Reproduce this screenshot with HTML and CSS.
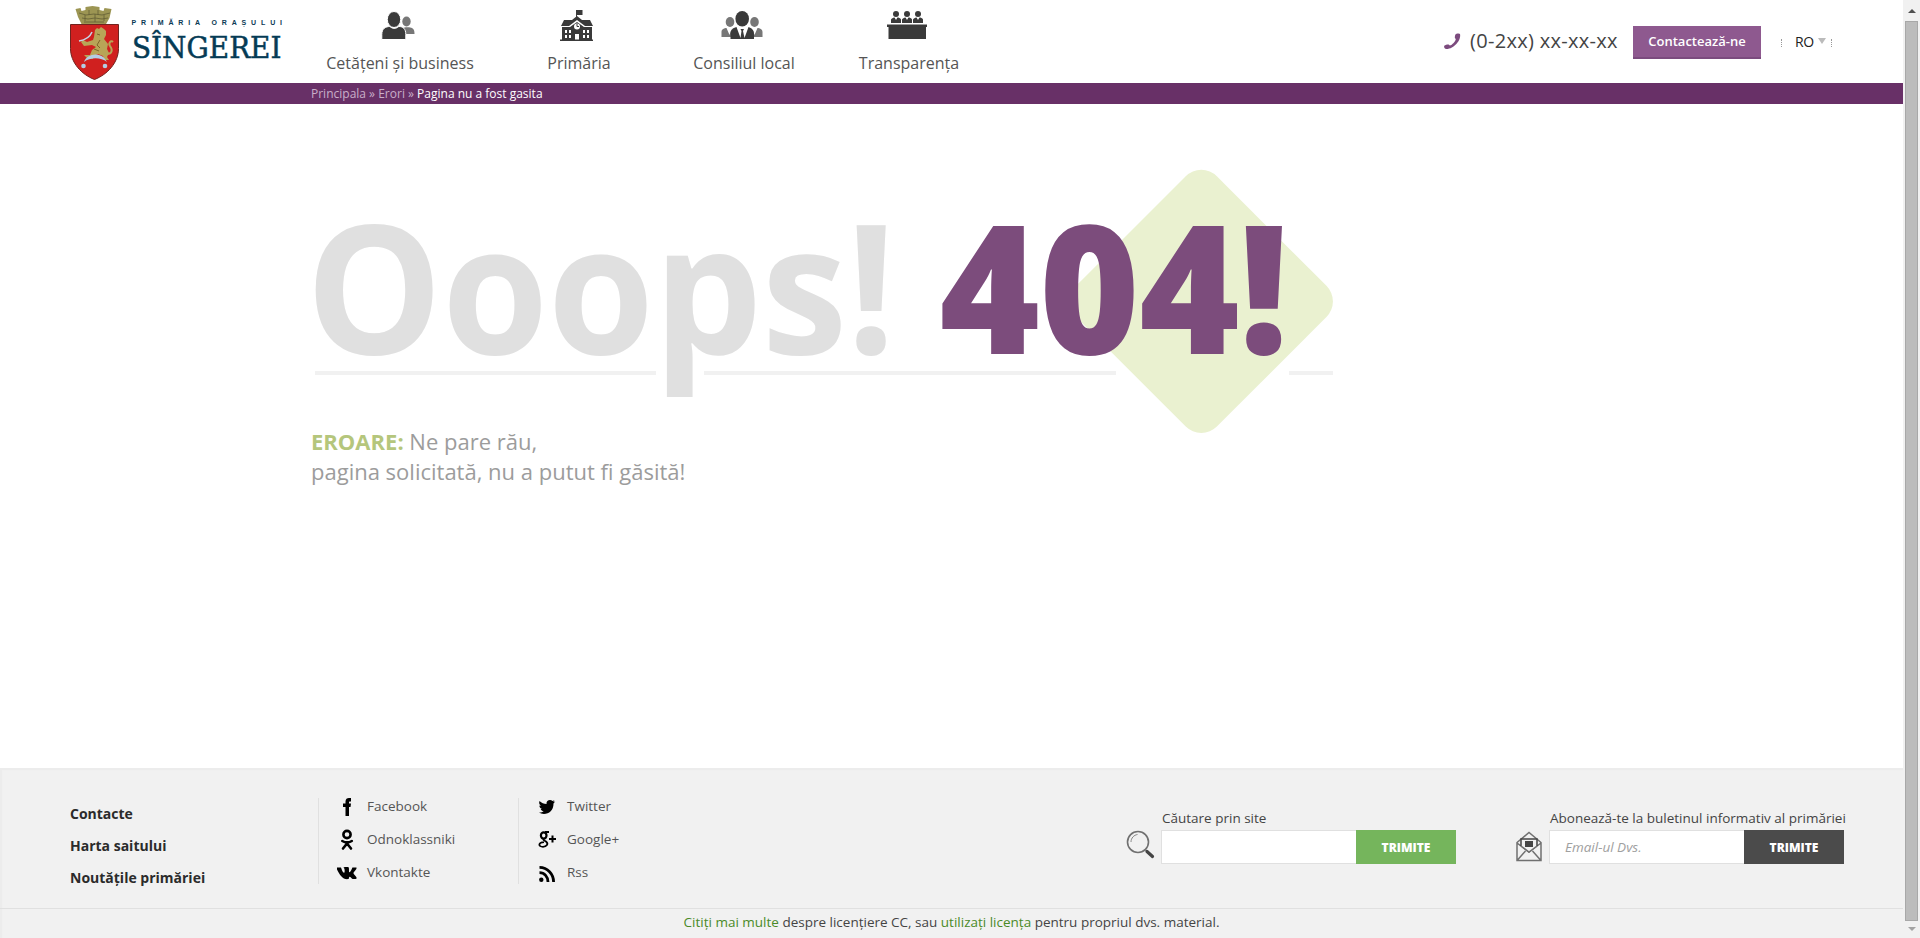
FILE: index.html
```html
<!DOCTYPE html>
<html lang="ro">
<head>
<meta charset="utf-8">
<title>Primăria Orașului Sîngerei</title>
<link rel="stylesheet" href="styles.css">
</head>
<body>
<div class="page">
  <header class="header">
    <a class="logo">
      <svg width="220" height="76" viewBox="0 0 220 76">
        <path class="crown" d="M5.500 4l5-1 1 3 4-1 0-3 7-1 7 1 0 3 4 1 1-3 7 1-2 9-4 7H12L8 12z"/>
        <path class="crown-line" d="M9 8l7 2 8-1 8 1 8-2M12 13l6 1 7-1 7 1 6-1M14 17h20M19 5v5M28 5v5M15 10v6M34 10v6M25 9v8"/>
        <path class="shield" d="M.5 19.500h48v24c0 14-11 26-24 31C11.500 69.500.5 57.500.5 43.500z"/>
        <path class="beast" d="M25 25l2-2 2 1 2-2 3 2 2 2 0 4-2 4 4 5-1 5 2 4-2 4 2 3h-5l-1-4-5-2-5 2 0 3-6-1-3-3 6 0 2-5 4-3-4-2-8 1-3-4 2-2 4 2 6-2 1-3z"/>
        <path class="tail" d="M37 49c5 0 6-4 3-8-2-3 1-6 3-4"/>
        <path class="beast-line" d="M27 29l3 1M30 35l-3 5 3 3M24 44l5 2"/>
        <path class="saber" d="M9 36c6-1 11-4 13-9"/>
        <path class="moon" d="M14 57c3-9 18-11 23 0-6-5-17-5-23 0z"/>
        <circle class="ball" cx="13.500" cy="61" r="2.300"/><circle class="ball" cx="35" cy="61" r="2.300"/>
        <text class="logo-top" x="61.500" y="19.800" textLength="150.500">PRIMĂRIA ORAȘULUI</text>
        <text class="logo-name" x="62" y="52.600" textLength="149.500" lengthAdjust="spacingAndGlyphs">SÎNGEREI</text>
      </svg>
    </a>
    <nav class="nav">
      <a class="nav-item citizens">
        <svg width="34" height="30" viewBox="0 0 34 30"><g fill="#777"><ellipse cx="25.500" cy="11.500" rx="4.200" ry="5"/><path d="M20 24v-5c2-2 9-2 11-1 2 1 2.500 3 2.500 6z"/></g><g fill="#3a3a3a" stroke="#fff"><ellipse cx="13" cy="9.500" rx="6.700" ry="8"/><path d="M.800 29.500v-5c0-6 4-8 8-8 3 2.500 6 2.500 9 0 4 0 7 2 7 8v5z"/></g></svg>
        <span>Cetățeni și business</span>
      </a>
      <a class="nav-item hall">
        <svg width="34" height="32" viewBox="0 0 34 32"><g fill="#3a3a3a"><path d="M16 1h6.500v5H17v4h-1zM4 11h8l5-4 5 4h8l3 6h-8l-8-6-8 6H1z"/><path d="M2 18h8l7-5 7 5h8v12.500h1V32H0v-1.500h2z"/></g><circle cx="17" cy="17.500" r="3" fill="#fff"/><path d="M17 15v2.500h2" fill="none" stroke="#3a3a3a"/><path fill="#fff" d="M5 21h2v3H5zm4 0h2v3H9zm14 0h2v3h-2zm4 0h2v3h-2zM5 26h2v3H5zm4 0h2v3H9zm14 0h2v3h-2zm4 0h2v3h-2zM15 25h4v5.500h-4z"/></svg>
        <span>Primăria</span>
      </a>
      <a class="nav-item council">
        <svg width="42" height="30" viewBox="0 0 42 30"><g fill="#777"><ellipse cx="9" cy="12" rx="4.300" ry="5"/><ellipse cx="33.500" cy="12" rx="4.300" ry="5"/><path d="M.500 27v-5c0-3 3-4 5-4l3 7 2-6v8zM41.500 27v-5c0-3-3-4-5-4l-3 7-2-6v8z"/></g><g fill="#3a3a3a"><ellipse cx="21.200" cy="8.700" rx="6.800" ry="7.700"/><path d="M9.500 29v-5c0-4 2-6 6-7l4 11 1-7-1-2h3.500l-1 2 1.500 7 4-11c3 1 5.500 3 5.500 7v5z"/></g></svg>
        <span>Consiliul local</span>
      </a>
      <a class="nav-item open">
        <svg width="40" height="30" viewBox="0 0 40 30"><g fill="#3a3a3a"><circle cx="9" cy="4" r="3"/><circle cx="20" cy="4" r="3"/><circle cx="31" cy="4" r="3"/><path d="M4 13V9.500C5 8 7 7.500 7.500 7.500L9 10l1.500-2.500c1 0 3 .5 3.500 2V13zM15 13V9.500C16 8 18 7.500 18.500 7.500L20 10l1.500-2.500c1 0 3 .5 3.500 2V13zM26 13V9.500C27 8 29 7.500 29.500 7.500L31 10l1.500-2.500c1 0 3 .5 3.500 2V13zM0 14.500h40V17h-1v12H1.500V17H0z"/></g></svg>
        <span>Transparența</span>
      </a>
    </nav>
    <div class="contact">
      <svg width="17" height="17" viewBox="0 0 17 17"><path fill="#7c4b7e" d="M11.500 1.500C12 .5 15.500 0 16 1c1.500 6-6 15-13.500 15C.5 16-.5 13.500.5 12.500c1-.8 4-1.500 4.500-.8l.8.9c2.500-.6 5.700-4.300 6-6.600l-.8-.7c-.5-.8 0-3 .5-3.800z"/></svg>
      <span class="phone">(0-2xx) xx-xx-xx</span>
      <a class="contact-btn">Contactează-ne</a>
      <span class="bar"></span><span class="lang">RO</span><i class="caret"></i><span class="bar"></span>
    </div>
  </header>
  <div class="crumbs"><a>Principala</a> » <a>Erori</a> » <b>Pagina nu a fost gasita</b></div>
  <main class="main">
    <svg class="hero" width="1024" height="256" viewBox="0 0 1024 256">
      <rect class="tile" x="790.800" y="31.900" width="199" height="199" rx="22" transform="rotate(45 890.300 131.400)"/>
      <path class="rule" d="M4 203h341M393 203h412M978 203h44"/>
      <text class="ooops" transform="translate(-5.200 184) scale(.96 1)">Ooops!</text>
      <text class="code" transform="translate(628.400 184) scale(.957 1)">404!</text>
    </svg>
    <p class="message"><strong>EROARE:</strong> Ne pare rău,<br>pagina solicitată, nu a putut fi găsită!</p>
  </main>
  <footer class="footer">
    <div class="footer-main">
      <ul class="links"><li>Contacte</li><li>Harta saitului</li><li>Noutățile primăriei</li></ul>
      <ul class="social">
        <li><svg viewBox="0 0 24 22"><path d="M10.500 20v-9H8V7.500h2.500V5.500C10.500 3 12 2 14 2h2v3.500h-1c-.8 0-1 .3-1 1v1h2l-.5 3.500H14v9z"/></svg>Facebook</li>
        <li><svg viewBox="0 0 24 22"><g fill="none" stroke="#000" stroke-width="2.600" stroke-linecap="round"><circle cx="12" cy="5.500" r="3.600"/><path d="M7.300 12c3 1.800 6.500 1.800 9.500 0M12 13.500v1L8 19.500M12 14.500l4 5"/></g></svg>Odnoklassniki</li>
        <li><svg viewBox="0 0 24 22"><path d="M2 5.500h4c.8 2.500 1.800 5 3 5.300 1 0 .7-3.500.3-4.300L8.500 5.600C9.500 5 12.500 5 13.500 5.200c.8.500.3 4 .7 5 1 .5 2.500-2.700 3.200-4.700h4c1 .8-2 4-3 5.500 0 1.200 4 4.300 3.200 5.600-.8.700-3 .5-4 .4-1-.3-2-2.200-3-2.200-.8.300-.5 1.700-1 2.200C8 18 5 13.500 2 7.500z"/></svg>Vkontakte</li>
      </ul>
      <ul class="social">
        <li><svg viewBox="0 0 24 22"><path d="M4.500 5c2 2 4.500 3 7 3.100C11.200 5.500 13 4 15 4c1 0 1.800.4 2.500 1l2-.8-1.200 1.900 1.900-.5-1.700 1.900c.2 6.500-4.500 10.500-9.500 10.500-2 0-3.700-.5-5-1.400 1.800.1 3.500-.4 4.700-1.400-1.500 0-2.700-1-3-2.200h1.400C5.500 12.500 4.400 11.300 4.400 9.500l1.500.4C4.300 8.700 3.800 6.700 4.500 5z"/></svg>Twitter</li>
        <li><svg viewBox="0 0 24 22"><g fill="none" stroke="#000"><ellipse cx="8.700" cy="6.500" rx="2.800" ry="3.200" stroke-width="2.200"/><path stroke-width="1.800" d="M10 3h4M9 9.500c-1.500 1.500.5 2 2 3 3 2.500.5 5.300-3 5.300-5 0-5-4.300 1-4.600"/><path stroke-width="2" d="M17.500 6.500v7M14 10h7"/></g></svg>Google+</li>
        <li><svg viewBox="0 0 24 22"><circle cx="6.300" cy="17.800" r="2.200"/><path fill="none" stroke="#000" stroke-width="2.800" d="M4.500 10.700c5 0 8.500 4 8.500 9.300M4.500 5.400C12.500 5.400 18.600 12 18.600 20"/></svg>Rss</li>
      </ul>
      <form class="form search">
        <svg width="29" height="30" viewBox="0 0 29 30"><circle cx="12" cy="12" r="10.500" fill="none" stroke="#707070" stroke-width="1.600"/><path d="M5 12c0-4 3-7 6.500-7.500" fill="none" stroke="#888"/><path d="M19 19.500l2.500 2" stroke="#777" stroke-width="1.500"/><path d="M21 21.500l5.500 5" stroke="#444" stroke-width="3.200" stroke-linecap="round"/></svg>
        <div><label>Căutare prin site</label><div class="field"><input type="text"><button type="button">TRIMITE</button></div></div>
      </form>
      <form class="form subscribe">
        <svg width="26" height="31" viewBox="0 0 26 31"><g fill="none" stroke="#707070" stroke-width="1.500"><path d="M1 11.500L13 1.500l12 10V29.500H1zM1 12l12 9 12-9M1.500 29l8-9M24.500 29l-8-9"/></g><path d="M5 8h16v7l-8 6-8-6z" fill="#f1f1f1"/><path d="M5 15V8h16v7" fill="none" stroke="#444" stroke-width="1.500"/><path d="M5 15l8 6 8-6" fill="none" stroke="#707070" stroke-width="1.500"/><path d="M9 10h8v6H9z" fill="#444"/></svg>
        <div><label>Abonează-te la buletinul informativ al primăriei</label><div class="field"><input type="text" placeholder="Email-ul Dvs."><button type="button">TRIMITE</button></div></div>
      </form>
    </div>
    <div class="license"><a>Citiți mai multe</a> despre licențiere CC, sau <a>utilizați licența</a> pentru propriul dvs. material.</div>
  </footer>
</div>
<div class="scrollbar"><i class="arrow up"></i><div class="thumb"></div><i class="arrow down"></i></div>
</body>
</html>
```
FILE: styles.css
```css
* { box-sizing: border-box; }
body { margin: 0; height: 938px; display: flex; overflow: hidden; background: #fff; font-family: "Open Sans", "Noto Sans", sans-serif; color: #444; }
.page { width: 1903px; display: flex; flex-direction: column; }
ul, p { margin: 0; padding: 0; list-style: none; }
svg { flex: none; overflow: visible; }

.header { height: 83px; display: flex; padding-left: 70px; }
.logo { width: 257px; padding-top: 5px; }
.crown { fill: #9c9553; }
.crown-line { fill: none; stroke: #625e35; stroke-width: .8; }
.shield { fill: #d0201f; stroke: #71231f; stroke-width: 1; }
.beast { fill: #b8a557; }
.beast-line { fill: none; stroke: #7c6428; }
.tail { fill: none; stroke: #b8a557; stroke-width: 2; }
.saber { fill: none; stroke: #c5d5e6; stroke-width: 1.5; }
.moon, .ball { fill: #b4cde4; }
.logo-top { font: 700 7px "Liberation Sans", sans-serif; fill: #0b3a55; }
.logo-name { font: 29.500px "DejaVu Serif", serif; fill: #053b55; stroke: #053b55; stroke-width: .5; }

.nav { display: flex; }
.nav-item { display: flex; flex-direction: column; align-items: center; justify-content: flex-end; height: 74px; font-size: 16px; line-height: 22px; color: #555; white-space: nowrap; }
.nav-item svg { margin: 0 4px 12px 0; }
.citizens { width: 146px; }
.hall { margin-left: 75px; width: 62px; }
.hall svg { margin-bottom: 11px; }
.council { margin-left: 84px; width: 100px; }
.open { margin-left: 65px; width: 100px; }

.contact { display: flex; align-items: center; height: 83px; margin-left: auto; padding-right: 71px; }
.contact svg { margin-right: 9px; }
.phone { font-size: 20px; line-height: 28px; font-weight: 500; width: 148px; margin: 0 15px 2px 0; letter-spacing: .3px; white-space: nowrap; }
.contact-btn { width: 128px; height: 33px; margin-top: 2px; line-height: 31px; text-align: center; font-size: 13px; font-weight: 600; color: #fff; background: #8e598f; border-bottom: 2px solid #7b4b7e; }
.bar { height: 8px; margin-top: 2px; border-left: 1px dotted #999; }
.contact-btn + .bar { margin-left: 20px; }
.lang { width: 23px; margin-left: 13px; font-size: 14px; line-height: 20px; letter-spacing: -.5px; color: #222; }
.caret { margin: -1px 5px 0 0; border: 4px solid transparent; border-width: 6px 4px 0; border-top-color: #bbb; }

.crumbs { height: 21px; padding-left: 311px; background: #683067; font-size: 12px; line-height: 21px; color: #c9afc9; }
.crumbs b { font-weight: 400; color: #fff; }

.main { flex: 1; padding: 66px 0 0 311px; }
.hero { display: block; }
.tile { fill: #eaf1d0; }
.rule { stroke: #f1f1f1; stroke-width: 4; }
.ooops { font-size: 179px; font-weight: 700; fill: #e0e0e0; letter-spacing: -.600px; }
.code { font-size: 179px; font-weight: 800; fill: #7c4c7c; letter-spacing: -.500px; }
.message { font-size: 22px; line-height: 30px; color: #9c9c9c; }
.message strong { font-weight: 700; color: #b5c67c; }

.footer { height: 170px; background: #f1f1f1; box-shadow: inset 2px 2px 1px #ececec; }
.footer-main { height: 141px; display: flex; align-items: flex-start; padding: 30px 56px 0 70px; border-bottom: 1px solid #e0e0e0; }
.links { width: 248px; font-size: 14px; line-height: 32px; font-weight: 700; color: #2b2b2b; }
.social { width: 200px; height: 86px; padding-left: 16px; border-left: 1px solid #e0e0e0; font-size: 13.500px; color: #555; }
.social li { display: flex; align-items: center; height: 33px; line-height: 20px; }
.social li:first-child { margin-top: -9px; }
.social svg { width: 24px; height: 22px; margin: 2px 8px 0 0; }
.form { display: flex; align-items: flex-end; font-size: 13.500px; line-height: 18px; height: 66px; }
.form label { display: block; padding-left: 1px; margin-bottom: 3px; white-space: nowrap; }
.search { margin-left: auto; width: 390px; }
.search svg { margin: 0 6px 4px 0; }
.subscribe { width: 331px; }
.subscribe svg { margin: 0 7px 2px 0; }
.field { display: flex; }
.field input { width: 195px; height: 34px; padding: 0 15px; border: 1px solid #e0e0e0; border-right: 0; background: #fff; font: italic 13.500px "Open Sans", sans-serif; }
.field input::placeholder { color: #a0a0a0; }
.field button { width: 100px; height: 34px; padding: 0; border: 0; background: #75b55c; color: #fff; font: 800 12px "Open Sans", sans-serif; }
.subscribe button { background: #4b4b4b; }
.license { text-align: center; font-size: 13.500px; line-height: 26px; }
.license a { color: #4a8a28; }

.scrollbar { width: 17px; background: #f1f1f1; display: flex; flex-direction: column; align-items: center; }
.thumb { width: 13px; height: 900px; background: #bcbcbc; border: 1px solid #a8a8a8; }
.arrow { border: 4px solid transparent; }
.up { border-width: 0 4px 4px; border-bottom-color: #505050; margin: 9px 0 8px; }
.down { border-width: 4px 4px 0; border-top-color: #a3a3a3; margin-top: 6px; }
```
